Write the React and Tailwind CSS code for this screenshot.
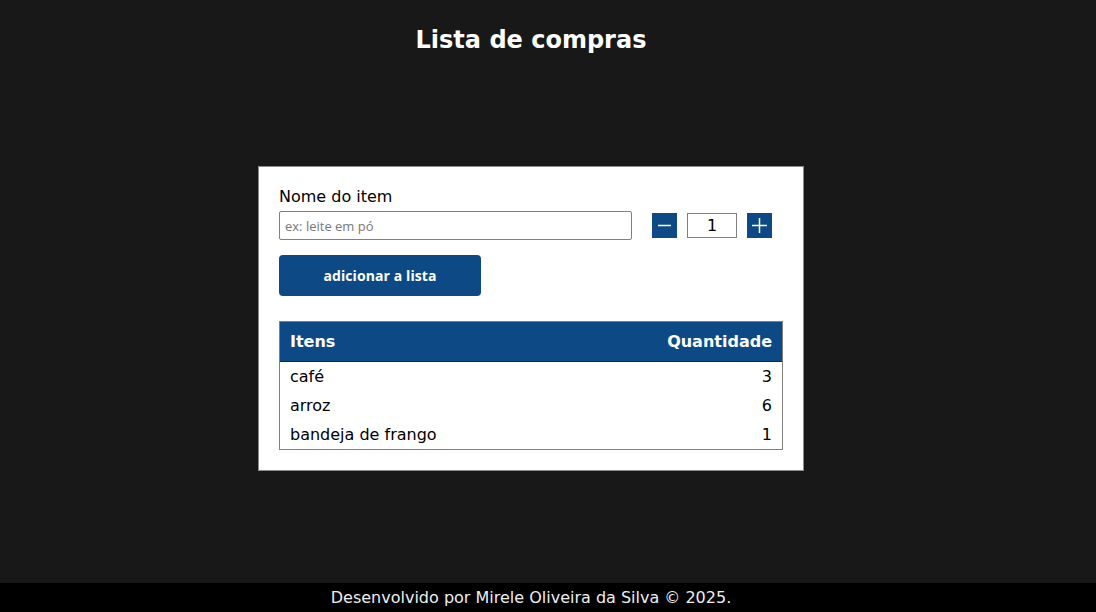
export default function App() {
  const items = [
    ["café", 3],
    ["arroz", 6],
    ["bandeja de frango", 1],
  ];
  return (
    <div
      className="w-[1096px] h-[612px] bg-[#181818] flex flex-col overflow-hidden"
      style={{ fontFamily: '"DejaVu Sans", sans-serif' }}
    >
      <div className="w-[1062px] flex-1 flex flex-col items-center">
        <h1 className="mt-[23px] text-[24px] leading-[34px] font-bold text-white">Lista de compras</h1>
        <div className="mt-[109px] w-[546px] bg-white border border-[#8a8a8a] px-[20px] pt-[19px] pb-[20px]">
          <label className="block text-[16px] leading-[22px] text-black">Nome do item</label>
          <div className="mt-[3px] flex items-center">
            <input
              className="w-[353px] h-[29px] border border-[#808080] rounded-[2px] px-[5px] text-[13px] outline-none placeholder:text-[#777]"
              style={{ fontFamily: '"Open Sans", sans-serif' }}
              placeholder="ex: leite em pó"
            />
            <button className="ml-[20px] w-[25px] h-[25px] bg-[#0d4a85] flex items-center justify-center">
              <svg width="13" height="13" viewBox="0 0 13 13"><path d="M0 6.5H13" stroke="white" strokeWidth="1.5" /></svg>
            </button>
            <div className="ml-[10px] w-[50px] h-[25px] border border-[#808080] flex items-center justify-center text-[16px] text-black">1</div>
            <button className="ml-[10px] w-[25px] h-[25px] bg-[#0d4a85] flex items-center justify-center">
              <svg width="15" height="15" viewBox="0 0 15 15"><path d="M0 7.5H15M7.5 0V15" stroke="white" strokeWidth="1.5" /></svg>
            </button>
          </div>
          <button
            className="mt-[15px] w-[202px] h-[41px] rounded-[4px] bg-[#0d4a85] text-white font-bold text-[14px] tracking-[0.1px]"
            style={{ fontFamily: '"Open Sans", sans-serif' }}
          >
            adicionar a lista
          </button>
          <div className="mt-[25px] w-[504px] border border-[#808080]">
            <div className="h-[40px] bg-[#0d4a85] border-b border-[#0a2a4a] flex items-center justify-between px-[10px] text-white font-bold text-[16px]">
              <span>Itens</span>
              <span>Quantidade</span>
            </div>
            {items.map(([n, q]) => (
              <div key={n} className="h-[29px] flex items-center justify-between px-[10px] text-[16px] text-black">
                <span>{n}</span>
                <span>{q}</span>
              </div>
            ))}
          </div>
        </div>
      </div>
      <footer className="h-[29px] bg-black flex items-center">
        <div className="w-[1062px] text-center text-[16px] text-[#eee]">Desenvolvido por Mirele Oliveira da Silva © 2025.</div>
      </footer>
    </div>
  );
}
